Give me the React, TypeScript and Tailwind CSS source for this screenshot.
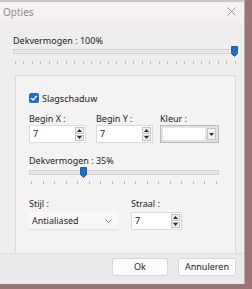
import React from "react";

const font = { fontFamily: '"Noto Sans", "Open Sans", sans-serif' };

function Ticks({ count }: { count: number }) {
  return (
    <div className="flex justify-between px-[2px]">
      {Array.from({ length: count }).map((_, i) => (
        <div key={i} className="w-px h-[3px] bg-[#bdb9b9]" />
      ))}
    </div>
  );
}

// trackbar: track + blue thumb, then tick row
function Slider({ pos, ticks, gap }: { pos: number; ticks: number; gap: string }) {
  return (
    <div className={`flex flex-col ${gap}`}>
      <div className="relative h-[11px] flex items-center">
        <div className="w-full h-[5px] bg-[#e7e5e5] border border-[#d5d1d1]" />
        <svg className="absolute top-0" style={{ left: pos }} width="7" height="11" viewBox="0 0 7 11">
          <path d="M0.5 0.5h6v7l-3 3l-3-3z" fill="#1f70c2" stroke="#1a5fa8" />
        </svg>
      </div>
      <Ticks count={ticks} />
    </div>
  );
}

function Arrow({ up }: { up?: boolean }) {
  return (
    <svg width="5" height="3" viewBox="0 0 5 3">
      <path d={up ? "M0 3L2.5 0L5 3z" : "M0 0L2.5 3L5 0z"} fill="#2a2a2a" />
    </svg>
  );
}

function Spin({ value, w }: { value: string; w: string }) {
  return (
    <div className={`flex h-[18px] bg-white border border-[#dcd9d9] ${w}`}>
      <div className="flex-1 pl-[3px] text-[9px] leading-[16px]">{value}</div>
      <div className="w-[10px] flex flex-col py-px pr-px gap-px">
        <div className="flex-1 flex items-center justify-center border border-[#c4c1c1] bg-[#f0efef]">
          <Arrow up />
        </div>
        <div className="flex-1 flex items-center justify-center border border-[#c4c1c1] bg-[#f0efef]">
          <Arrow />
        </div>
      </div>
    </div>
  );
}

export default function App() {
  return (
    <div className="w-[252px] h-[289px] bg-[#977674] flex overflow-hidden text-[#1b1b1b]" style={font}>
      <div className="w-[245px] h-[284px] flex flex-col bg-[#efeded] border-r border-[#b8aaa9]">
        <div className="h-[21px] flex items-center justify-between bg-[#f5f1f1] border-t-2 border-[#cdc6c6] pl-[3px] pr-[8px]">
          <span className="text-[10px] leading-[12px] text-[#8d8b8b]">Opties</span>
          <svg width="9" height="9" viewBox="0 0 9 9">
            <path d="M0.5 0.5L8.5 8.5M8.5 0.5L0.5 8.5" stroke="#8d8b8b" strokeWidth="0.9" />
          </svg>
        </div>
        <div className="flex-1 flex flex-col pl-[13px] pr-[6px] pt-[14px]">
          <div className="text-[9px] leading-[11px]">Dekvermogen : 100%</div>
          <Slider pos={218} ticks={27} gap="gap-[4px]" />
          <div className="mt-[11px] ml-[2px] mr-[2px] flex-1 border border-b-0 border-[#dcd8d8] bg-[#f4f2f2] pl-[13px] pt-[17px] flex flex-col">
            <div className="flex items-center gap-[3px] h-[10px]">
              <div className="w-[10px] h-[10px] rounded-[2px] bg-[#1f70c2] flex items-center justify-center">
                <svg width="8" height="8" viewBox="0 0 8 8">
                  <path d="M1.2 4.2L3.2 6L6.8 1.8" stroke="white" strokeWidth="1.3" fill="none" />
                </svg>
              </div>
              <span className="text-[9px] leading-[11px]">Slagschaduw</span>
            </div>
            <div className="flex mt-[10px]">
              <div className="flex flex-col gap-px">
                <span className="text-[9px] leading-[11px]">Begin X :</span>
                <Spin value="7" w="w-[57px]" />
              </div>
              <div className="flex flex-col gap-px ml-[10px]">
                <span className="text-[9px] leading-[11px]">Begin Y :</span>
                <Spin value="7" w="w-[57px]" />
              </div>
              <div className="flex flex-col gap-px ml-[7px]">
                <span className="text-[9px] leading-[11px]">Kleur :</span>
                <div className="w-[59px] h-[18px] border border-[#bcb9b9] bg-[#e3e1e1] p-[2px] flex gap-[2px]">
                  <div className="flex-1 bg-white" />
                  <div className="w-[9px] flex items-center justify-center bg-[#f3f2f2] border border-[#c7c4c4]">
                    <Arrow />
                  </div>
                </div>
              </div>
            </div>
            <div className="text-[9px] leading-[11px] mt-[12px]">Dekvermogen : 35%</div>
            <div className="mt-px w-[190px]">
              <Slider pos={51} ticks={17} gap="gap-[3px]" />
            </div>
            <div className="flex mt-[14px]">
              <div className="flex flex-col gap-[3px]">
                <span className="text-[9px] leading-[11px]">Stijl :</span>
                <div className="w-[89px] h-[18px] bg-[#f9f8f8] border-b border-[#e2dfdf] flex items-center justify-between pl-[3px] pr-[6px]">
                  <span className="text-[9px] leading-[11px]">Antialiased</span>
                  <svg width="7" height="4" viewBox="0 0 7 4">
                    <path d="M0.5 0.5L3.5 3.5L6.5 0.5" stroke="#7a7a7a" fill="none" />
                  </svg>
                </div>
              </div>
              <div className="flex flex-col gap-[3px] ml-[13px]">
                <span className="text-[9px] leading-[11px]">Straal :</span>
                <Spin value="7" w="w-[51px]" />
              </div>
            </div>
          </div>
        </div>
        <div className="h-[31px] bg-[#eaeaed] border-t border-[#dddce0] flex items-start justify-end gap-[10px] pr-[8px] pt-[4px]">
          <button className="w-[56px] h-[18px] bg-[#fbfbfb] border border-[#d5d5d8] rounded-[2px] text-[9px] leading-[16px]">Ok</button>
          <button className="w-[58px] h-[18px] bg-[#fbfbfb] border border-[#d5d5d8] rounded-[2px] text-[9px] leading-[16px]">Annuleren</button>
        </div>
      </div>
    </div>
  );
}
